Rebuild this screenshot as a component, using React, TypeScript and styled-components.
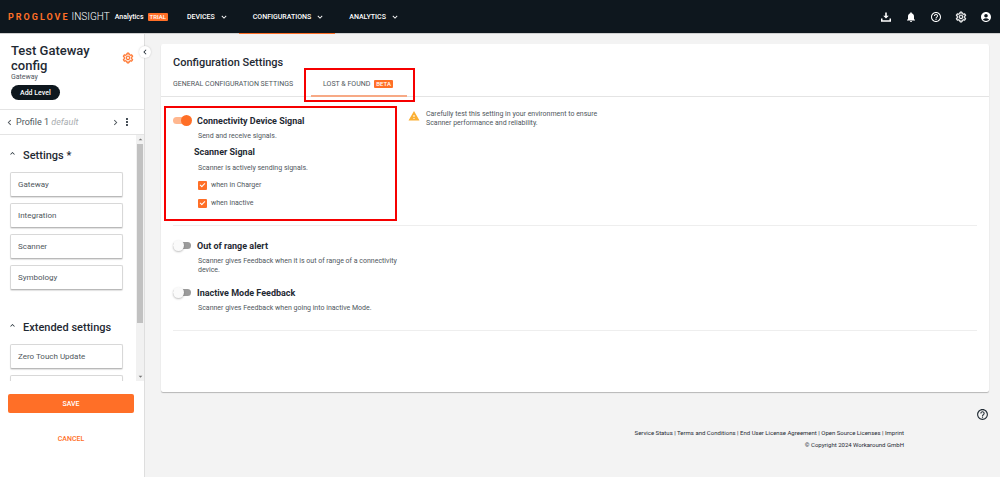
import React from 'react';
import styled, { createGlobalStyle, css } from 'styled-components';
import {
  MdNotifications,
  MdHelpOutline,
  MdAccountCircle,
  MdWarning,
  MdMoreVert,
  MdChevronLeft,
  MdChevronRight,
  MdExpandMore,
  MdExpandLess,
  MdArrowDropUp,
  MdArrowDropDown,
} from 'react-icons/md';
import { AiOutlineSetting } from 'react-icons/ai';

const orange = '#ff6f27';
const ink = '#0e171e';
const heading = '#1f2a33';
const body = '#4f575d';

const GlobalStyle = createGlobalStyle`
  *, *::before, *::after { box-sizing: border-box; }
  body { margin: 0; background: #f3f3f3; color: ${heading}; font-family: Roboto, "Liberation Sans", sans-serif; font-size: 8px; }
  button { font: inherit; color: inherit; background: none; border: 0; padding: 0; cursor: pointer; }
  a { color: inherit; text-decoration: none; }
  h1, h2, h3, p { margin: 0; }
  svg { display: block; flex: none; }
`;

const Page = styled.div`
  display: flex;
  flex-direction: column;
  height: 100vh;
`;

const Header = styled.header`
  position: relative;
  z-index: 1;
  display: flex;
  align-items: stretch;
  height: 33px;
  flex: none;
  padding: 0 8px;
  background: ${ink};
  color: #fff;
  box-shadow: 0 1px 0 #cfcfcf;
`;

const Brand = styled.a`
  display: flex;
  align-items: center;
  width: 165px;
`;

const BrandName = styled.span`
  font-size: 9px;
  font-weight: 700;
  letter-spacing: 2px;
  color: ${orange};
`;

const BrandProduct = styled.span`
  margin-left: 2px;
  font-size: 10px;
  font-weight: 300;
`;

const BrandArea = styled.span`
  margin: 0 4px 0 5px;
  font-size: 7px;
  font-weight: 500;
`;

const Badge = styled.span`
  padding: 0 2px;
  border-radius: 1px;
  background: ${orange};
  color: #fff;
  font-size: 6px;
  line-height: 8px;
  font-weight: 500;
`;

const Nav = styled.nav`
  display: flex;
  flex: 1;
`;

const NavButton = styled.button<{ $active?: boolean }>`
  position: relative;
  display: flex;
  align-items: center;
  gap: 4px;
  padding: 0 10px 0 14px;
  font-size: 7px;
  font-weight: 500;
  ${(p) =>
    p.$active &&
    css`
      &::after {
        content: '';
        position: absolute;
        left: 0;
        right: 0;
        bottom: -1px;
        height: 1px;
        background: ${orange};
      }
    `}
`;

const HeaderIcons = styled.div`
  display: flex;
  align-items: center;
  gap: 13px;
`;

const Gear = styled(AiOutlineSetting)`
  width: 12px;
  height: 12px;
  stroke: currentColor;
  stroke-width: 36px;
`;

const Columns = styled.div`
  display: flex;
  flex: 1;
  min-height: 0;
`;

const Sidebar = styled.aside`
  position: relative;
  display: flex;
  flex-direction: column;
  width: 145px;
  flex: none;
  background: #fff;
  border-right: 1px solid #dedede;
`;

const CollapseButton = styled.button`
  position: absolute;
  top: 13px;
  right: -7px;
  display: grid;
  place-items: center;
  width: 12px;
  height: 12px;
  border-radius: 50%;
  background: #fff;
  box-shadow: 0 0 2px rgba(0, 0, 0, 0.2);
`;

const ConfigHead = styled.div`
  display: flex;
  justify-content: space-between;
  padding: 10px 10px 9px 11px;
  border-bottom: 1px solid #e4e4e4;
`;

const ConfigTitle = styled.h1`
  font-size: 13px;
  line-height: 15px;
  font-weight: 500;
`;

const ConfigKind = styled.p`
  margin-bottom: 4px;
  font-size: 7px;
  line-height: 8px;
  color: ${body};
`;

const AddLevel = styled.button`
  height: 15px;
  padding: 0 9px;
  border-radius: 8px;
  background: ${ink};
  color: #fff;
  font-size: 7px;
  font-weight: 500;
`;

const ConfigSettings = styled.button`
  align-self: flex-start;
  margin-top: 9px;
  color: ${orange};
`;

const ProfileRow = styled.div`
  display: flex;
  align-items: center;
  height: 25px;
  padding: 0 11px 0 4px;
  border-bottom: 1px solid #e4e4e4;
  font-size: 9px;
  color: ${body};
`;

const ProfileName = styled.span`
  flex: 1;
  padding-left: 1px;
  em { color: #a9adb0; }
`;

const ScrollRegion = styled.div`
  display: flex;
  flex: 1;
  min-height: 0;
`;

const ScrollContent = styled.div`
  flex: 1;
  overflow: hidden;
  padding: 14px 13px 0 10px;
`;

const ScrollTrack = styled.div`
  display: flex;
  flex-direction: column;
  align-items: center;
  width: 8px;
  background: #f1f1f1;
  color: #777;
`;

const ScrollThumb = styled.div`
  width: 6px;
  height: 179px;
  margin-bottom: auto;
  background: #c1c1c1;
`;

const Group = styled.section`
  margin-bottom: 31px;
`;

const GroupToggle = styled.button`
  display: flex;
  gap: 6px;
  height: 14px;
  margin-bottom: 9px;
  margin-left: -2px;
  font-size: 11px;
  line-height: 14px;
  font-weight: 500;
`;

const GroupItems = styled.div`
  display: grid;
  gap: 6px;
`;

const GroupItem = styled.button`
  height: 25px;
  padding: 0 7px;
  border: 1px solid #d8d8d8;
  border-bottom-color: #b9b9b9;
  border-radius: 2px;
  box-shadow: 0 1px 1px rgba(0, 0, 0, 0.12);
  background: #fff;
  text-align: left;
  font-size: 8px;
  color: ${body};
`;

const SidebarActions = styled.div`
  display: grid;
  gap: 16px;
  align-content: start;
  height: 96px;
  padding: 13px 10px 0 8px;
`;

const ActionButton = styled.button<{ $primary?: boolean }>`
  height: 19px;
  border-radius: 2px;
  font-size: 7px;
  font-weight: 500;
  color: ${(p) => (p.$primary ? '#fff' : orange)};
  background: ${(p) => (p.$primary ? orange : 'transparent')};
`;

const Main = styled.main`
  display: flex;
  flex-direction: column;
  flex: 1;
  min-width: 0;
  padding: 11px 11px 0 16px;
`;

const Card = styled.section`
  padding-bottom: 61px;
  border-radius: 2px;
  background: #fff;
  box-shadow: 0 1px 1px rgba(0, 0, 0, 0.25);
`;

const CardTitle = styled.h2`
  padding: 11px 12px 7px;
  font-size: 11px;
  line-height: 15px;
  font-weight: 500;
`;

const Tabs = styled.div`
  display: flex;
  gap: 4px;
  border-bottom: 1px solid #e4e4e4;
`;

const Tab = styled.button<{ $active?: boolean }>`
  position: relative;
  display: flex;
  align-items: center;
  gap: 4px;
  height: 19px;
  padding: 0 14px 5px 12px;
  font-size: 7px;
  color: ${body};
  ${(p) =>
    p.$active &&
    css`
      &::before {
        content: '';
        position: absolute;
        left: 0;
        right: 0;
        bottom: -1px;
        height: 2px;
        background: #f7a985;
      }
    `}
`;

const Highlight = styled.span<{ $inset: string; $width?: string }>`
  position: absolute;
  inset: ${(p) => p.$inset};
  width: ${(p) => p.$width ?? 'auto'};
  border: 2px solid #f60000;
  pointer-events: none;
`;

const Panel = styled.section`
  position: relative;
  display: flex;
  margin: 0 12px;
  padding: 13px 0 17px;
  border-bottom: 1px solid #eee;
`;

const Options = styled.div<{ $lowered?: boolean }>`
  display: grid;
  gap: 11px;
  width: 235px;
  padding-top: ${(p) => (p.$lowered ? '4px' : '0')};
`;

const SwitchLabel = styled.label`
  display: flex;
  align-items: center;
  gap: 6px;
  height: 13px;
  font-size: 9px;
  font-weight: 700;
`;

const Switch = styled.input`
  appearance: none;
  position: relative;
  width: 18px;
  height: 7px;
  margin: 0;
  border-radius: 4px;
  background: #9b9b9b;
  &::before {
    content: '';
    position: absolute;
    top: -2px;
    left: 0;
    width: 11px;
    height: 11px;
    border-radius: 50%;
    background: #fafafa;
    box-shadow: 0 1px 2px rgba(0, 0, 0, 0.25);
  }
  &:checked { background: #ffb78f; }
  &:checked::before { left: 8px; background: ${orange}; box-shadow: none; }
`;

const Hint = styled.p`
  padding: 5px 0 0 25px;
  font-size: 7px;
  line-height: 9px;
  color: ${body};
`;

const SubTitle = styled.h3`
  padding: 5px 0 1px 21px;
  font-size: 9px;
  line-height: 12px;
  font-weight: 700;
`;

const CheckLabel = styled.label`
  display: flex;
  align-items: center;
  gap: 4px;
  height: 18px;
  padding-left: 25px;
  font-size: 7px;
  color: ${body};
`;

const CheckBox = styled.input`
  appearance: none;
  width: 9px;
  height: 9px;
  margin: 0;
  border-radius: 1px;
  background: ${orange};
  &:checked::before {
    content: '';
    display: block;
    width: 5px;
    height: 3px;
    margin: 2px;
    border: solid #fff;
    border-width: 0 0 1px 1px;
    transform: rotate(-45deg);
  }
`;

const CheckList = styled.div`
  padding-top: 3px;
  margin-bottom: -4px;
`;

const Warning = styled.p`
  display: flex;
  gap: 6px;
  width: 206px;
  font-size: 7px;
  line-height: 9px;
  color: ${body};
  svg { color: #fbb034; }
`;

const HelpButton = styled.button`
  align-self: flex-end;
  margin-top: 16px;
`;

const Footer = styled.footer`
  padding: 6px 85px 0 0;
  text-align: right;
  font-size: 6px;
  line-height: 12px;
  color: ${heading};
`;

const settings = ['Gateway', 'Integration', 'Scanner', 'Symbology'];
const extended = ['Zero Touch Update', ''];
const legal = [
  'Service Status',
  'Terms and Conditions',
  'End User License Agreement',
  'Open Source Licenses',
  'Imprint',
];

function DownloadIcon() {
  return (
    <svg width="12" height="12" viewBox="0 0 12 12" fill="currentColor">
      <path d="M5.2 1.5h1.6v3.2h2L6 7.6 3.2 4.7h2z" />
      <path d="M1 7.4h1.5v1.8h7V7.4H11v3.3H1z" />
    </svg>
  );
}

function SettingsGroup({ title, items }: { title: string; items: string[] }) {
  return (
    <Group>
      <GroupToggle>
        <MdExpandLess size={9} />
        {title}
      </GroupToggle>
      <GroupItems>
        {items.map((item) => (
          <GroupItem key={item}>{item}</GroupItem>
        ))}
      </GroupItems>
    </Group>
  );
}

function SwitchOption({ label, hint, on }: { label: string; hint: string; on?: boolean }) {
  return (
    <div>
      <SwitchLabel>
        <Switch type="checkbox" role="switch" defaultChecked={on} />
        {label}
      </SwitchLabel>
      <Hint>{hint}</Hint>
    </div>
  );
}

export default function App() {
  return (
    <Page>
      <GlobalStyle />
      <Header>
        <Brand href="#">
          <BrandName>PROGLOVE</BrandName>
          <BrandProduct>INSIGHT</BrandProduct>
          <BrandArea>Analytics</BrandArea>
          <Badge>TRIAL</Badge>
        </Brand>
        <Nav>
          <NavButton>DEVICES <MdExpandMore size={10} /></NavButton>
          <NavButton $active>CONFIGURATIONS <MdExpandMore size={10} /></NavButton>
          <NavButton>ANALYTICS <MdExpandMore size={10} /></NavButton>
        </Nav>
        <HeaderIcons>
          <button aria-label="Downloads"><DownloadIcon /></button>
          <button aria-label="Notifications"><MdNotifications size={12} /></button>
          <button aria-label="Help"><MdHelpOutline size={12} /></button>
          <button aria-label="Settings"><Gear /></button>
          <button aria-label="Account"><MdAccountCircle size={12} /></button>
        </HeaderIcons>
      </Header>
      <Columns>
        <Sidebar>
          <ConfigHead>
            <div>
              <ConfigTitle>Test Gateway config</ConfigTitle>
              <ConfigKind>Gateway</ConfigKind>
              <AddLevel>Add Level</AddLevel>
            </div>
            <ConfigSettings aria-label="Configuration settings"><Gear /></ConfigSettings>
          </ConfigHead>
          <ProfileRow>
            <button aria-label="Previous profile"><MdChevronLeft size={11} /></button>
            <ProfileName>Profile 1 <em>default</em></ProfileName>
            <button aria-label="Next profile"><MdChevronRight size={11} /></button>
            <button aria-label="Profile menu"><MdMoreVert size={12} color={heading} /></button>
          </ProfileRow>
          <ScrollRegion>
            <ScrollContent>
              <SettingsGroup title="Settings *" items={settings} />
              <SettingsGroup title="Extended settings" items={extended} />
            </ScrollContent>
            <ScrollTrack>
              <MdArrowDropUp size={9} />
              <ScrollThumb />
              <MdArrowDropDown size={9} />
            </ScrollTrack>
          </ScrollRegion>
          <SidebarActions>
            <ActionButton $primary>SAVE</ActionButton>
            <ActionButton>CANCEL</ActionButton>
          </SidebarActions>
          <CollapseButton aria-label="Collapse sidebar"><MdChevronLeft size={10} /></CollapseButton>
        </Sidebar>
        <Main>
          <Card>
            <CardTitle>Configuration Settings</CardTitle>
            <Tabs role="tablist">
              <Tab role="tab">GENERAL CONFIGURATION SETTINGS</Tab>
              <Tab role="tab" aria-selected $active>
                LOST &amp; FOUND <Badge>BETA</Badge>
                <Highlight $inset="-9px -8px -6px -7px" />
              </Tab>
            </Tabs>
            <Panel>
              <Options $lowered>
                <div>
                  <SwitchOption label="Connectivity Device Signal" hint="Send and receive signals." on />
                  <SubTitle>Scanner Signal</SubTitle>
                  <Hint>Scanner is actively sending signals.</Hint>
                  <CheckList>
                    <CheckLabel><CheckBox type="checkbox" defaultChecked />when in Charger</CheckLabel>
                    <CheckLabel><CheckBox type="checkbox" defaultChecked />when inactive</CheckLabel>
                  </CheckList>
                </div>
              </Options>
              <Warning>
                <MdWarning size={12} />
                Carefully test this setting in your environment to ensure Scanner performance and reliability.
              </Warning>
              <Highlight $inset="9px auto 4px -9px" $width="233px" />
            </Panel>
            <Panel>
              <Options>
                <SwitchOption label="Out of range alert" hint="Scanner gives Feedback when it is out of range of a connectivity device." />
                <SwitchOption label="Inactive Mode Feedback" hint="Scanner gives Feedback when going into inactive Mode." />
              </Options>
            </Panel>
          </Card>
          <HelpButton aria-label="Help"><MdHelpOutline size={13} /></HelpButton>
          <Footer>
            <div>
              {legal.map((name, i) => (
                <React.Fragment key={name}>
                  {i > 0 && ' | '}
                  <a href="#">{name}</a>
                </React.Fragment>
              ))}
            </div>
            <div>© Copyright 2024 Workaround GmbH</div>
          </Footer>
        </Main>
      </Columns>
    </Page>
  );
}
